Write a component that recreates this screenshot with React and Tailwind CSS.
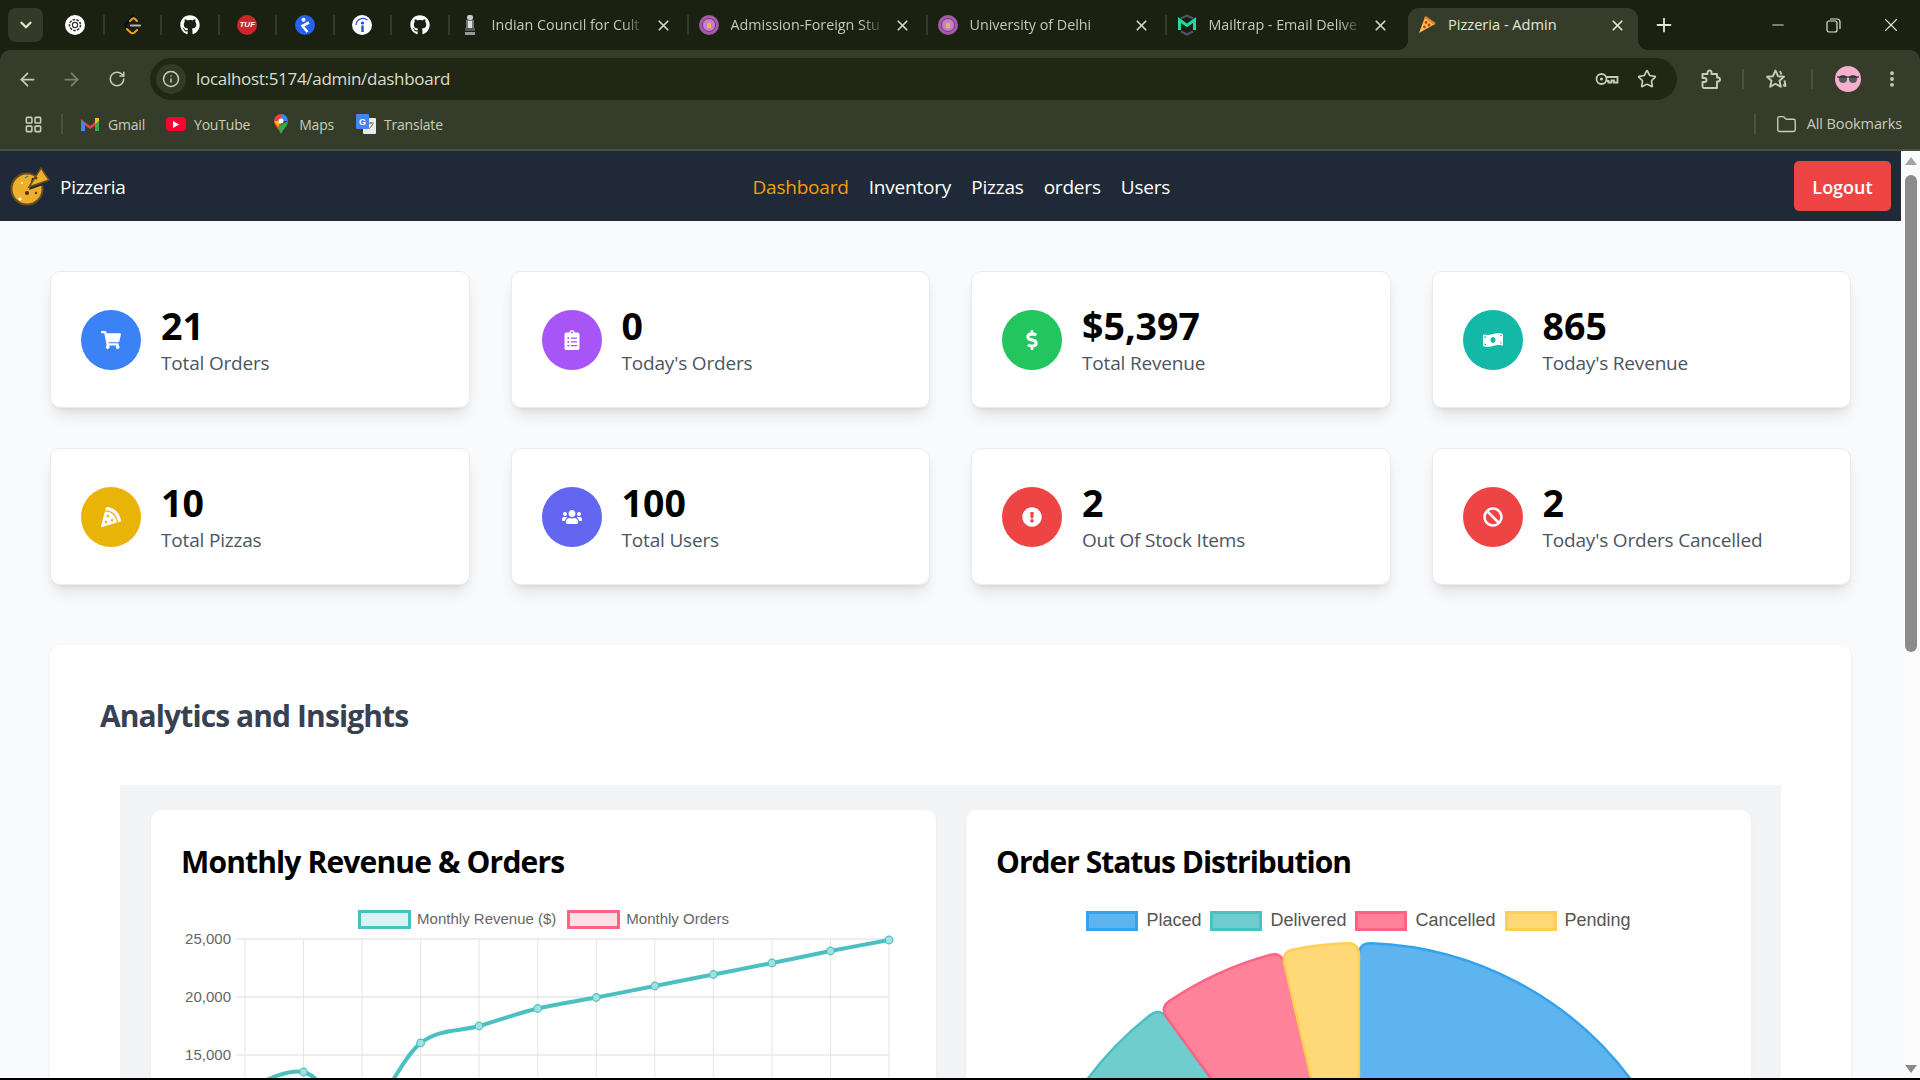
import { ArrowLeft, ArrowRight, RotateCw, Info, Star, MoreVertical, Folder, X, Plus, Minus, ChevronDown, LayoutGrid } from 'lucide-react';
import { FaShoppingCart, FaClipboardList, FaDollarSign, FaMoneyBillWave, FaPizzaSlice, FaUsers, FaExclamationCircle, FaBan, FaGithub } from 'react-icons/fa';

const stats = [
  { value: '21', label: 'Total Orders', bg: 'bg-[#3b82f6]', Icon: FaShoppingCart },
  { value: '0', label: "Today's Orders", bg: 'bg-[#a855f7]', Icon: FaClipboardList },
  { value: '$5,397', label: 'Total Revenue', bg: 'bg-[#22c55e]', Icon: FaDollarSign },
  { value: '865', label: "Today's Revenue", bg: 'bg-[#14b8a6]', Icon: FaMoneyBillWave },
  { value: '10', label: 'Total Pizzas', bg: 'bg-[#eab308]', Icon: FaPizzaSlice },
  { value: '100', label: 'Total Users', bg: 'bg-[#6366f1]', Icon: FaUsers },
  { value: '2', label: 'Out Of Stock Items', bg: 'bg-[#ef4444]', Icon: FaExclamationCircle },
  { value: '2', label: "Today's Orders Cancelled", bg: 'bg-[#ef4444]', Icon: FaBan },
];

function Sep() {
  return <div className="w-[2px] h-[20px] bg-[#333b28] shrink-0" />;
}

function PinnedIcon({ name }) {
  if (name === 'gpt') return (
    <svg width="20" height="20" viewBox="0 0 20 20"><circle cx="10" cy="10" r="10" fill="#fff" /><circle cx="10" cy="10" r="5.5" fill="none" stroke="#333" strokeWidth="1.5" strokeDasharray="2.6 1.2" /><circle cx="10" cy="10" r="2.6" fill="none" stroke="#333" strokeWidth="1.2" /></svg>
  );
  if (name === 'leetcode') return (
    <svg width="20" height="20" viewBox="0 0 20 20" fill="none" strokeWidth="2" strokeLinecap="round"><path d="M11 1 L3 10 L7 15" stroke="#0b0b0b" /><path d="M5 14 L8.5 17.5 Q10.5 19 12.5 17.5 L15 15" stroke="#f89f1b" /><path d="M8 6 L10.5 3.5 Q12 3 13 4 L15 6" stroke="#f89f1b" /><path d="M9 10.5 H18" stroke="#b3b3b3" /></svg>
  );
  if (name === 'tuf') return (
    <div className="w-[20px] h-[20px] rounded-full bg-[#d1232e] flex items-center justify-center text-white text-[8px] font-bold italic font-['Liberation_Sans',sans-serif]">TUF</div>
  );
  if (name === 'k') return (
    <svg width="20" height="20" viewBox="0 0 20 20"><circle cx="10" cy="10" r="10" fill="#2563eb" /><circle cx="8.5" cy="4.8" r="2" fill="#fff" /><path d="M14 7.5 L7.5 11 L12.5 17" stroke="#fff" strokeWidth="2.6" fill="none" /></svg>
  );
  if (name === 'info') return (
    <svg width="20" height="20" viewBox="0 0 20 20"><circle cx="10" cy="10" r="10" fill="#fff" /><circle cx="10.5" cy="8" r="1.6" fill="#1d4ed8" /><rect x="9.3" y="10.5" width="2.4" height="6.5" fill="#1d4ed8" /><path d="M4 10 A7 7 0 0 1 15.5 5" stroke="#1d4ed8" fill="none" strokeWidth="1.2" /></svg>
  );
  return <FaGithub className="w-[20px] h-[20px] text-white" />;
}

function Emblem() {
  return (
    <svg width="16" height="22" viewBox="0 0 16 22"><rect x="5" y="1" width="6" height="5" rx="2" fill="#c9c9c9" /><rect x="4" y="6" width="8" height="8" fill="#777" /><rect x="6" y="7" width="4" height="7" fill="#ddd" /><rect x="3" y="14" width="10" height="3" fill="#555" /><rect x="3" y="18" width="10" height="3" fill="#999" /></svg>
  );
}

function Seal() {
  return (
    <svg width="20" height="20" viewBox="0 0 20 20"><circle cx="10" cy="10" r="10" fill="#a45aa8" /><circle cx="10" cy="10" r="6.5" fill="#c77fc9" stroke="#6c3a78" strokeWidth="1" /><rect x="8" y="8" width="4" height="5" fill="#e3b84c" /></svg>
  );
}

function MailtrapIcon() {
  return (
    <svg width="20" height="22" viewBox="0 0 20 22" fill="none"><path d="M4 4.5 L10 1.5 L16 4.5" stroke="#4a5568" strokeWidth="2.2" /><path d="M4 17.5 L10 20.5 L16 17.5" stroke="#4a5568" strokeWidth="2.2" /><path d="M2.5 16 V6 L10 11.5 L17.5 6 V16" stroke="#1fd8a4" strokeWidth="3" /></svg>
  );
}

function PizzaFav() {
  return (
    <svg width="18" height="18" viewBox="0 0 18 18"><path d="M1 17 L7 1 L17 8 Z" fill="#f7c04a" /><path d="M7 1 L17 8" stroke="#e8842c" strokeWidth="2.5" /><circle cx="8" cy="6.5" r="1.4" fill="#d6322c" /><circle cx="11" cy="9" r="1.4" fill="#d6322c" /><circle cx="6.5" cy="11" r="1.4" fill="#d6322c" /></svg>
  );
}

function Tab({ icon, title }) {
  return (
    <div className="w-[237px] flex items-center pl-[10px] pr-[15px] shrink-0">
      <span className="w-[20px] flex justify-center shrink-0">{icon}</span>
      <span className="ml-[12px] flex-1 text-[14.3px] text-[#c3c9b6] whitespace-nowrap overflow-hidden [mask-image:linear-gradient(to_right,black_86%,transparent)]">{title}</span>
      <X size={17} strokeWidth={2.4} className="ml-[10px] text-[#d0d5c4]" />
    </div>
  );
}

function ActiveTab() {
  return (
    <div className="relative w-[230px] h-[42px] ml-[4.5px] self-end bg-[#353d2a] rounded-t-[11px] flex items-center pb-[8px] pl-[10px] pr-[12px] text-[#e1e6d6] shrink-0">
      <div className="absolute bottom-0 -left-[10px] w-[10px] h-[10px] bg-[radial-gradient(circle_at_0_0,transparent_10px,#353d2a_10px)]" />
      <div className="absolute bottom-0 -right-[10px] w-[10px] h-[10px] bg-[radial-gradient(circle_at_100%_0,transparent_10px,#353d2a_10px)]" />
      <PizzaFav />
      <span className="ml-[12px] flex-1 text-[14.6px] truncate">Pizzeria - Admin</span>
      <X size={17} strokeWidth={2.4} />
    </div>
  );
}

function TabStrip() {
  return (
    <div className="h-[50px] flex items-center pl-[8px] shrink-0 overflow-hidden">
      <div className="w-[35px] h-[34px] rounded-lg bg-[#333b28] flex items-center justify-center shrink-0">
        <ChevronDown size={18} strokeWidth={3} className="text-[#e1e6d6]" />
      </div>
      <div className="ml-[4px] flex items-center">
        {['gpt', 'leetcode', 'github', 'tuf', 'k', 'info', 'github'].map((name, i) => (
          <div key={i} className="flex items-center">
            <div className="w-[55.5px] flex justify-center shrink-0"><PinnedIcon name={name} /></div>
            <Sep />
          </div>
        ))}
      </div>
      <Tab icon={<Emblem />} title="Indian Council for Cult" />
      <Sep />
      <Tab icon={<Seal />} title="Admission-Foreign Stu" />
      <Sep />
      <Tab icon={<Seal />} title="University of Delhi" />
      <Sep />
      <Tab icon={<MailtrapIcon />} title="Mailtrap - Email Delive" />
      <ActiveTab />
      <Plus size={22} strokeWidth={2} className="ml-[15px] text-[#e1e6d6]" />
      <div className="ml-auto flex items-center h-full text-[#e1e6d6]">
        <div className="w-[52px] flex justify-center"><Minus size={18} strokeWidth={1.3} /></div>
        <div className="w-[58px] flex justify-center">
          <svg width="15" height="15" viewBox="0 0 15 15" fill="none" stroke="currentColor" strokeWidth="1.2"><rect x="1" y="3" width="10" height="11" rx="2" /><path d="M4 1 H11 A3 3 0 0 1 14 4 V11" /></svg>
        </div>
        <div className="w-[58px] flex justify-center"><X size={22} strokeWidth={1.2} /></div>
      </div>
    </div>
  );
}

function KeyIcon() {
  return (
    <svg width="24" height="14" viewBox="0 0 24 14" fill="none" stroke="currentColor" strokeWidth="1.8" className="ml-auto"><circle cx="6.5" cy="7" r="5" /><circle cx="6.5" cy="7" r="1.6" fill="currentColor" stroke="none" /><path d="M11.5 5 H22.5 V10.5 H19 V8.5 H16.5 V10.5 H13.5 V9 H11.5" /></svg>
  );
}

function ExtensionIcon() {
  return (
    <svg width="21" height="21" viewBox="0 0 21 21" fill="none" stroke="currentColor" strokeWidth="1.9" strokeLinejoin="round" className="ml-[23px]"><path d="M2.5 5 H7.5 V3.5 A2 2 0 0 1 11.5 3.5 V5 H17 V8.5 H18 A2 2 0 0 1 18 12.5 H17 V19 H4 A1.5 1.5 0 0 1 2.5 17.5 V13 H4.5 A2 2 0 0 0 4.5 9 H2.5 Z" /></svg>
  );
}

function StarListIcon() {
  return (
    <svg width="23" height="22" viewBox="0 0 23 22" fill="none" stroke="currentColor" strokeWidth="1.9" strokeLinejoin="round" className="ml-[22px]"><path d="M9.5 2.5 L12 8.2 L18 8.8 L13.5 12.8 L14.8 18.8 L9.5 15.7 L4.2 18.8 L5.5 12.8 L1 8.8 L7 8.2 Z" /><path d="M14 3 L15.5 6.5 M18.5 12.5 L19.5 18 L17 17" /></svg>
  );
}

function Toolbar() {
  return (
    <div className="h-[51px] pt-[7px] bg-[#353d2a] rounded-t-[10px] flex items-center shrink-0 text-[#c7cdb9]">
      <div className="w-[54px] flex justify-center"><ArrowLeft size={21} strokeWidth={2} /></div>
      <div className="w-[34px] flex justify-center"><ArrowRight size={21} strokeWidth={2} className="text-[#7b8270]" /></div>
      <div className="w-[58px] flex justify-center"><RotateCw size={18} strokeWidth={2} /></div>
      <div className="w-[1527px] h-[42px] ml-[4px] rounded-full bg-[#212715] flex items-center pl-[6px] pr-[20px]">
        <div className="w-[30px] h-[30px] rounded-full bg-[#333b28] flex items-center justify-center"><Info size={18} strokeWidth={2} /></div>
        <span className="ml-[10px] text-[17px] tracking-[-0.3px] text-[#d9dfcd]">localhost:5174/admin/dashboard</span>
        <KeyIcon />
        <Star size={20} strokeWidth={2} className="ml-[18px]" />
      </div>
      <ExtensionIcon />
      <div className="w-[2px] h-[20px] bg-[#4a5240] ml-[21px]" />
      <StarListIcon />
      <div className="w-[2px] h-[20px] bg-[#4a5240] ml-[22px]" />
      <div className="w-[26px] h-[26px] ml-[22px] rounded-full bg-[#f4b0cc] flex items-center justify-center">
        <svg width="22" height="10" viewBox="0 0 22 10"><circle cx="6" cy="5" r="4" fill="#55585c" /><circle cx="16" cy="5" r="4" fill="#55585c" /><path d="M0 3 H22" stroke="#222" strokeWidth="1.2" /></svg>
      </div>
      <MoreVertical size={20} strokeWidth={2.6} className="ml-[21px]" />
    </div>
  );
}

function GmailIcon() {
  return (
    <svg width="18" height="14" viewBox="0 0 18 14"><path d="M0 2 L9 9 L18 2 V6 L9 12 L0 6 Z" fill="#ea4335" /><path d="M0 3 V14 H4 V6 Z" fill="#4285f4" /><path d="M18 3 V14 H14 V6 Z" fill="#34a853" /><path d="M14 1 L18 1 V4 L14 7 Z" fill="#fbbc04" /></svg>
  );
}

function YoutubeIcon() {
  return (
    <div className="w-[20px] h-[14px] rounded-[4px] bg-[#ff0033] flex items-center justify-center">
      <svg width="6" height="7" viewBox="0 0 6 7"><path d="M0 0 L6 3.5 L0 7 Z" fill="#fff" /></svg>
    </div>
  );
}

function MapsIcon() {
  return (
    <svg width="14" height="20" viewBox="0 0 14 20"><path d="M7 0 A7 7 0 0 0 0 7 C0 12 5 15 7 20 Z" fill="#ea4335" /><path d="M7 0 A7 7 0 0 1 14 7 L7 7 Z" fill="#4285f4" /><path d="M14 7 C14 12 9 15 7 20 L4 13 L10 9 Z" fill="#34a853" /><path d="M0 7 L4 13 L7 7 Z" fill="#fbbc04" /><circle cx="7" cy="7" r="2.5" fill="#fff" /></svg>
  );
}

function TranslateIcon() {
  return (
    <svg width="20" height="20" viewBox="0 0 20 20"><rect x="7" y="4" width="13" height="16" rx="1" fill="#e8eaed" /><rect x="0" y="0" width="13" height="15" rx="1" fill="#4285f4" /><text x="3" y="11" fontSize="9" fontWeight="700" fill="#fff" fontFamily="Liberation Sans, sans-serif">G</text><path d="M12 9 H18 M15 8 V10 M13 15 L17 10" stroke="#777" strokeWidth="1" fill="none" /></svg>
  );
}

function Bookmark({ icon, label, className, gap }) {
  return (
    <div className={`flex items-center text-[14px] tracking-[-0.2px] text-[#c7cdb9] ${className}`}>
      {icon}
      <span className={gap}>{label}</span>
    </div>
  );
}

function BookmarksBar() {
  return (
    <div className="h-[50px] pb-[2px] bg-[#353d2a] border-b-2 border-[#4a5040] flex items-center shrink-0 pl-[24px] text-[#c7cdb9]">
      <LayoutGrid size={19} strokeWidth={2} />
      <div className="w-[2px] h-[20px] bg-[#4a5240] ml-[18px]" />
      <Bookmark className="ml-[18px]" gap="ml-[9px]" icon={<GmailIcon />} label="Gmail" />
      <Bookmark className="ml-[21px]" gap="ml-[8px]" icon={<YoutubeIcon />} label="YouTube" />
      <Bookmark className="ml-[24px]" gap="ml-[11px]" icon={<MapsIcon />} label="Maps" />
      <Bookmark className="ml-[22px]" gap="ml-[8px]" icon={<TranslateIcon />} label="Translate" />
      <div className="w-[2px] h-[20px] bg-[#4a5240] ml-auto" />
      <Folder size={21} strokeWidth={1.6} className="ml-[20px]" />
      <span className="ml-[10px] mr-[18px] text-[14.5px] tracking-[-0.1px]">All Bookmarks</span>
    </div>
  );
}

function PizzaLogo() {
  return (
    <svg width="40" height="40" viewBox="0 0 40 40">
      <circle cx="17" cy="23" r="15.5" fill="#eeaf2c" stroke="#6b4f1f" strokeWidth="2" />
      <path d="M19 24 L33 19 L35 10 L22 12 Z" fill="#1f2937" />
      <path d="M19 21 L31 2 L39 14 Z" fill="#eeaf2c" stroke="#6b4f1f" strokeWidth="1.5" />
      <circle cx="26" cy="12" r="1.5" fill="#6b3e12" />
      <circle cx="12" cy="17" r="1" fill="#fff" />
      <circle cx="17" cy="27" r="2" fill="#4a2d12" />
      <circle cx="10" cy="33" r="1.6" fill="#fff" />
      <circle cx="26" cy="27" r="1.3" fill="#6b3e12" />
      <path d="M15 12 L18 10" stroke="#4c8b3a" strokeWidth="1.5" />
    </svg>
  );
}

function Navbar() {
  return (
    <div className="h-[70px] bg-[#1f2937] flex items-center px-[10px] shrink-0 text-white">
      <PizzaLogo />
      <span className="ml-[10px] pt-[2px] text-[19px] tracking-[-0.3px]">Pizzeria</span>
      <div className="ml-[627px] pt-[2px] flex items-center gap-[20px] text-[19px] tracking-[-0.2px]">
        <span className="text-[#f59e0b]">Dashboard</span>
        <span>Inventory</span>
        <span>Pizzas</span>
        <span>orders</span>
        <span>Users</span>
      </div>
      <button className="ml-auto w-[97px] h-[50px] pt-[3px] bg-[#ef4444] rounded-[5px] text-[18px] font-semibold">Logout</button>
    </div>
  );
}

function StatCard({ value, label, bg, Icon }) {
  return (
    <div className="h-[137px] bg-white rounded-[10px] border border-[#e9ebee] shadow-lg flex items-center px-[30px]">
      <div className={`w-[60px] h-[60px] rounded-full ${bg} flex items-center justify-center text-white shrink-0`}>
        <Icon size={20} />
      </div>
      <div className="ml-[20px] pt-[2px]">
        <div className="text-[37.5px] font-bold text-black leading-[44px]">{value}</div>
        <div className="pt-[1px] text-[19px] text-[#4b5563] leading-[28px] tracking-[-0.18px]">{label}</div>
      </div>
    </div>
  );
}

const revenue = [
  [0, 1090], [58.5, 1072], [117, 1115], [175.6, 1043], [234, 1026], [292.7, 1008.5], [351.3, 997.5],
  [409.8, 986], [468.4, 974.5], [527, 963], [585.5, 951], [644, 940],
];

function smoothPath(points) {
  let d = `M${points[0][0]} ${points[0][1]}`;
  for (let i = 0; i < points.length - 1; i++) {
    const p0 = points[Math.max(i - 1, 0)];
    const p1 = points[i];
    const p2 = points[i + 1];
    const p3 = points[Math.min(i + 2, points.length - 1)];
    const c1x = p1[0] + (p2[0] - p0[0]) / 6;
    const c1y = p1[1] + (p2[1] - p0[1]) / 6;
    const c2x = p2[0] - (p3[0] - p1[0]) / 6;
    const c2y = p2[1] - (p3[1] - p1[1]) / 6;
    d += ` C${c1x} ${c1y} ${c2x} ${c2y} ${p2[0]} ${p2[1]}`;
  }
  return d;
}

function LineChart() {
  // x offset from the grid's left edge, y is page px minus the chart's top
  const pts = revenue.map(([x, y]) => [x + 94, y - 931]);
  const ticks = [['25,000', 8], ['20,000', 66], ['15,000', 124]];
  return (
    <svg width="785" height="220" viewBox="0 0 785 220" className="block">
      {ticks.map(([t, y]) => (
        <g key={t}>
          <line x1="85" x2="738" y1={y} y2={y} stroke="#e8e8e8" strokeWidth="1.5" />
          <text x="80" y={y + 5} textAnchor="end" fontSize="15" fill="#666" fontFamily="Liberation Sans, sans-serif">{t}</text>
        </g>
      ))}
      {revenue.map(([x], i) => (
        <line key={i} x1={x + 94} x2={x + 94} y1="8" y2="220" stroke="#e5e5e5" strokeWidth="1" />
      ))}
      <path d={smoothPath(pts)} fill="none" stroke="#4bc0c0" strokeWidth="4" />
      {pts.map(([x, y], i) => (
        <circle key={i} cx={x} cy={y} r="3.8" fill="#a5dfdf" stroke="#4bc0c0" strokeWidth="1.2" />
      ))}
    </svg>
  );
}

// rounded pie wedge, angles in degrees clockwise from 12 o'clock
function wedge(cx, cy, r, a1, a2, round) {
  const pt = (rad, deg) => {
    const t = (deg * Math.PI) / 180;
    return `${(cx + rad * Math.sin(t)).toFixed(1)} ${(cy - rad * Math.cos(t)).toFixed(1)}`;
  };
  const da = (round / r) * (180 / Math.PI);
  const large = a2 - a1 - 2 * da > 180 ? 1 : 0;
  return `M${cx} ${cy} L${pt(r - round, a1)} Q${pt(r, a1)} ${pt(r, a1 + da)} A${r} ${r} 0 ${large} 1 ${pt(r, a2 - da)} Q${pt(r, a2)} ${pt(r - round, a2)} Z`;
}

function PieChart() {
  const cx = 393;
  const cy = 348;
  const r = 339;
  const slices = [
    { a1: 0, a2: 226, fill: '#5eb4ef', stroke: '#36a2eb' },
    { a1: 226, a2: 324, fill: '#6fcdcd', stroke: '#4bc0c0' },
    { a1: 324, a2: 346.8, fill: '#ff829b', stroke: '#ff6384' },
    { a1: 346.8, a2: 360, fill: '#ffd878', stroke: '#ffce56' },
  ];
  return (
    <div className="h-[150px] overflow-hidden">
      <svg width="785" height="700" viewBox="0 0 785 700" className="block">
        {slices.map((s, i) => (
          <path key={i} d={wedge(cx, cy, r, s.a1, s.a2, 12)} fill={s.fill} stroke={s.stroke} strokeWidth="2.5" strokeLinejoin="round" />
        ))}
      </svg>
    </div>
  );
}

function LegendItem({ label, border, fill, size, w, h, gap, text }) {
  return (
    <div className="flex items-center" style={{ gap, fontSize: size, color: text }}>
      <div className="border-[3px]" style={{ width: w, height: h, borderColor: border, background: fill }} />
      <span>{label}</span>
    </div>
  );
}

function Analytics() {
  return (
    <div className="mt-[60px] bg-white rounded-t-[10px] shadow-sm shadow-gray-200 pl-[50px] pr-[70px] pt-[48px]">
      <h2 className="text-[30px] font-bold text-[#374151] leading-[46px] tracking-[-0.9px]">Analytics and Insights</h2>
      <div className="mt-[46px] ml-[20px] bg-[#f3f4f6] pl-[31px] pr-[30px] pt-[25px] grid grid-cols-2 gap-[30px]">
        <div className="bg-white rounded-[10px] h-[400px] pt-[30px] shadow-sm shadow-gray-200">
          <h3 className="px-[30px] text-[30px] font-bold text-black leading-[44px] tracking-[-0.85px]">Monthly Revenue &amp; Orders</h3>
          <div className="mt-[24px] flex justify-center gap-[11px] font-['Liberation_Sans',sans-serif]">
            <LegendItem label="Monthly Revenue ($)" border="#4bc0c0" fill="#dbf2f2" size="15px" w={53} h={19} gap="6px" text="#666" />
            <LegendItem label="Monthly Orders" border="#ff6384" fill="#ffe0e6" size="15px" w={53} h={19} gap="6px" text="#666" />
          </div>
          <LineChart />
        </div>
        <div className="bg-white rounded-[10px] h-[400px] pt-[30px] shadow-sm shadow-gray-200">
          <h3 className="px-[30px] text-[30px] font-bold text-black leading-[44px] tracking-[-1px]">Order Status Distribution</h3>
          <div className="mt-[23px] flex justify-center gap-[9px] font-['Liberation_Sans',sans-serif]">
            <LegendItem label="Placed" border="#36a2eb" fill="#5eb4ef" size="18px" w={52} h={20} gap="8px" text="#555" />
            <LegendItem label="Delivered" border="#4bc0c0" fill="#6fcdcd" size="18px" w={52} h={20} gap="8px" text="#555" />
            <LegendItem label="Cancelled" border="#ff6384" fill="#ff829b" size="18px" w={52} h={20} gap="8px" text="#555" />
            <LegendItem label="Pending" border="#ffce56" fill="#ffd878" size="18px" w={52} h={20} gap="8px" text="#555" />
          </div>
          <PieChart />
        </div>
      </div>
    </div>
  );
}

function Scrollbar() {
  return (
    <div className="w-[19px] shrink-0 bg-[#fbfbfb] flex flex-col items-center">
      <svg width="12" height="8" viewBox="0 0 12 8" className="mt-[6px] text-[#a3a3a3]" fill="currentColor"><path d="M6 0 L12 8 H0 Z" /></svg>
      <div className="w-[12px] h-[477px] mt-[10px] rounded-full bg-[#8b8b8b]" />
      <svg width="12" height="8" viewBox="0 0 12 8" className="mt-auto mb-[5px] text-[#8b8b8b]" fill="currentColor"><path d="M6 8 L12 0 H0 Z" /></svg>
    </div>
  );
}

export default function App() {
  return (
    <div className="h-screen overflow-hidden flex flex-col font-['Open_Sans',sans-serif] bg-black pb-[2px]">
      <div className="bg-[#1a2110] shrink-0">
        <TabStrip />
        <Toolbar />
        <BookmarksBar />
      </div>
      <div className="flex-1 min-h-0 flex">
        <div className="flex-1 min-w-0 flex flex-col">
          <Navbar />
          <div className="flex-1 min-h-0 overflow-hidden bg-[#f9fafb] px-[50px] pt-[50px]">
            <div className="grid grid-cols-4 gap-x-[41px] gap-y-[40px]">
              {stats.map((s) => <StatCard key={s.label} {...s} />)}
            </div>
            <Analytics />
          </div>
        </div>
        <Scrollbar />
      </div>
    </div>
  );
}
